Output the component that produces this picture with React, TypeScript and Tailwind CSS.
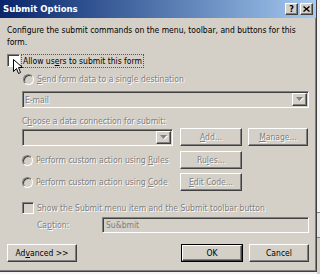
import React from 'react'

const raised =
  'border border-t-white border-l-white border-r-[#404040] border-b-[#404040] shadow-[inset_-1px_-1px_0_#808080] bg-[#D4D0C8]'
const sunken =
  'border border-t-[#808080] border-l-[#808080] border-r-white border-b-white shadow-[inset_1px_1px_0_#404040]'
const dim = 'text-[#808080] [text-shadow:1px_1px_0_#ffffff] whitespace-nowrap'

function Arrow() {
  return (
    <div className={`${raised} w-[15px] h-[13px] flex items-center justify-center`}>
      <svg width="8" height="5" viewBox="0 0 8 5">
        <path d="M1 1h7L4.5 4.5z" fill="#ffffff" />
        <path d="M0 0h7L3.5 4z" fill="#808080" />
      </svg>
    </div>
  )
}

function Btn({ label, disabled, primary, w = 'w-[62px]' }: { label: React.ReactNode; disabled?: boolean; primary?: boolean; w?: string }) {
  const inner = (
    <div className={`${raised} h-full w-full flex items-center justify-center whitespace-nowrap ${disabled ? dim : 'text-black'}`}>{label}</div>
  )
  return primary ? (
    <div className={`${w} h-[18px] border border-black`}>{inner}</div>
  ) : (
    <div className={`${w} h-[18px]`}>{inner}</div>
  )
}

function Radio() {
  return <div className={`w-[11px] h-[11px] shrink-0 rounded-full ${sunken} bg-[#D4D0C8]`} />
}

export default function App() {
  return (
    <div className="w-[320px] h-[274px] flex bg-[#f4f4f4] font-['DejaVu_Sans_Condensed','Liberation_Sans',sans-serif] text-[8.5px] leading-[12px] overflow-hidden">
      {/* dialog */}
      <div className="w-[317px] h-[272px] shrink-0 bg-[#D4D0C8] border-r border-b border-r-[#404040] border-b-[#404040] shadow-[inset_-1px_-1px_0_#808080] flex flex-col relative">
        {/* title bar */}
        <div className="h-[18px] shrink-0 bg-gradient-to-r from-[#0A246A] to-[#A6CAF0] flex items-center pl-[3px] pr-[3px]">
          <span className="text-white font-bold text-[9.5px] flex-1">Submit Options</span>
          <div className="flex gap-[2px]">
            <div className={`${raised} w-[13px] h-[12px] flex items-center justify-center text-black font-bold text-[9px] leading-none`}>?</div>
            <div className={`${raised} w-[13px] h-[12px] flex items-center justify-center`}>
              <svg width="7" height="6" viewBox="0 0 7 6">
                <path d="M0.5 0.5l6 5M6.5 0.5l-6 5" stroke="#000" strokeWidth="1.4" />
              </svg>
            </div>
          </div>
        </div>

        {/* body */}
        <div className="flex flex-col pl-[7px] pr-[7px] pt-[6px]">
          <p className="text-black h-[24px]">
            Configure the submit commands on the menu, toolbar, and buttons for this form.
          </p>

          {/* allow checkbox */}
          <div className="flex items-center mt-[5px] h-[15px]">
            <div className={`w-[13px] h-[13px] shrink-0 bg-white ${sunken}`} />
            <span className="ml-[1px] px-[1px] border border-dotted border-[#555] text-black whitespace-nowrap">
              Allow us<u>e</u>rs to submit this form
            </span>
          </div>

          {/* send to single destination */}
          <div className="flex items-center mt-[4px] pl-[16px] h-[14px]">
            <Radio />
            <span className={`ml-[3px] ${dim}`}><u>S</u>end form data to a single destination</span>
          </div>

          <div className={`ml-[15px] mt-[5px] h-[17px] ${sunken} bg-[#D4D0C8] flex items-center justify-between pl-[2px] pr-[1px]`}>
            <span className={dim}>E-mail</span>
            <Arrow />
          </div>

          <div className={`ml-[15px] mt-[7px] h-[12px] ${dim}`}>C<u>h</u>oose a data connection for submit:</div>

          <div className="ml-[15px] mt-[1px] h-[18px] flex items-center">
            <div className={`w-[151px] h-[17px] ${sunken} bg-[#D4D0C8] flex items-center justify-end pr-[1px]`}>
              <Arrow />
            </div>
            <div className="ml-[7px] flex gap-[6px]">
              <Btn label={<><u>A</u>dd...</>} disabled />
              <Btn label={<><u>M</u>anage...</>} disabled w="w-[60px]" />
            </div>
          </div>

          <div className="ml-[15px] mt-[5px] h-[18px] flex items-center">
            <div className="w-[158px] flex items-center">
              <Radio />
              <span className={`ml-[3px] ${dim}`}>Perform custom action using <u>R</u>ules</span>
            </div>
            <Btn label={<>Ru<u>l</u>es...</>} disabled />
          </div>

          <div className="ml-[15px] mt-[4px] h-[18px] flex items-center">
            <div className="w-[158px] flex items-center">
              <Radio />
              <span className={`ml-[3px] ${dim}`}>Perform custom action using <u>C</u>ode</span>
            </div>
            <Btn label={<><u>E</u>dit Code...</>} disabled />
          </div>

          <div className="ml-[15px] mt-[10px] flex items-center h-[13px]">
            <div className={`w-[12px] h-[12px] shrink-0 ${sunken} bg-[#D4D0C8]`} />
            <span className={`ml-[3px] ${dim}`}>Show the Submit menu item and the Submit toolbar button</span>
          </div>

          <div className="ml-[30px] mt-[3px] h-[16px] flex items-center">
            <span className={`w-[65px] ${dim}`}>Ca<u>p</u>tion:</span>
            <div className={`flex-1 h-[16px] ${sunken} bg-[#D4D0C8] flex items-center pl-[3px] text-[#808080]`}>Su&amp;bmit</div>
          </div>

          <div className="mt-[11px] h-[18px] flex items-center">
            <Btn label={<>Ad<u>v</u>anced &gt;&gt;</>} w="w-[70px]" />
            <div className="flex-1" />
            <div className="flex gap-[6px]">
              <Btn label="OK" primary />
              <Btn label="Cancel" w="w-[60px]" />
            </div>
          </div>
        </div>

        {/* mouse cursor */}
        <svg className="absolute left-[13px] top-[59px]" width="10" height="16" viewBox="0 0 10 16">
          <path d="M0.5 0.5v12l3-3 2 5 2-1-2-5h4z" fill="#ffffff" stroke="#000000" strokeWidth="1" />
        </svg>
      </div>

      {/* window behind */}
      <div className="flex-1 flex flex-col">
        <div className="h-[212px] bg-[#f4f4f4]" />
        <div className="h-[1px] bg-[#808080]" />
        <div className="h-[24px] bg-[#e6e6e6]" />
        <div className="h-[1px] bg-[#808080]" />
        <div className="flex-1 bg-[#D4D0C8]" />
      </div>
    </div>
  )
}
